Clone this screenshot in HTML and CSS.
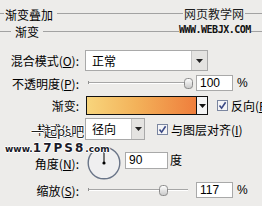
FILE: index.html
```html
<!DOCTYPE html>
<html>
<head>
<meta charset="utf-8">
<link rel="stylesheet" href="styles.css">
</head>
<body>
<div class="panel">
  <div class="legend l1"><span class="lead"></span><span class="lt">渐变叠加</span><span class="rule"></span></div>
  <div class="legend l2"><span class="lead"></span><span class="lt">渐变</span><span class="rule"></span></div>

  <div class="row r-blend">
    <span class="lab">混合模式(<u>O</u>):</span>
    <div class="select s-blend"><span class="val">正常</span><span class="btn"><svg width="7" height="4" viewBox="0 0 7 4"><polygon points="0,0 7,0 3.5,4" fill="#222"/></svg></span></div>
  </div>

  <div class="row r-opac">
    <span class="lab">不透明度(<u>P</u>):</span>
    <div class="slider"><span class="tick"></span><span class="thumb" style="left:96px"><svg width="9" height="11" viewBox="0 0 9 11"><defs><linearGradient id="tg1" x1="0" y1="0" x2="0" y2="1"><stop offset="0" stop-color="#ffffff"/><stop offset="1" stop-color="#c8c8c8"/></linearGradient></defs><rect x="0.5" y="0.5" width="8" height="10" rx="3" fill="url(#tg1)" stroke="#8a8a8a"/></svg></span></div>
    <div class="num n-opac">100</div><span class="unit">%</span>
  </div>

  <div class="row r-grad">
    <span class="lab">渐变:</span>
    <div class="grad"></div>
    <span class="gbtn"><svg width="7" height="4" viewBox="0 0 7 4"><polygon points="0,0 7,0 3.5,4" fill="#111"/></svg></span>
    <span class="cb cb-rev"><svg width="11" height="11" viewBox="0 0 11 11"><rect x="0.5" y="0.5" width="10" height="10" fill="#f4f4f6" stroke="#7b86a0"/><path d="M2.5 5.5 L4.6 8.2 L8.6 2.2" fill="none" stroke="#3c4a86" stroke-width="1.6"/></svg></span>
    <span class="cbl">反向(<u>R</u>)</span>
  </div>

  <div class="row r-style">
    <span class="lab">样式(<u>L</u>):</span>
    <div class="select s-style"><span class="val">径向</span><span class="btn"><svg width="7" height="4" viewBox="0 0 7 4"><polygon points="0,0 7,0 3.5,4" fill="#222"/></svg></span></div>
    <span class="cb cb-align"><svg width="11" height="11" viewBox="0 0 11 11"><rect x="0.5" y="0.5" width="10" height="10" fill="#f4f4f6" stroke="#7b86a0"/><path d="M2.5 5.5 L4.6 8.2 L8.6 2.2" fill="none" stroke="#3c4a86" stroke-width="1.6"/></svg></span>
    <span class="cbl">与图层对齐(<u>I</u>)</span>
  </div>

  <div class="row r-angle">
    <span class="lab">角度(<u>N</u>):</span>
    <span class="dial"><svg width="34" height="34" viewBox="0 0 34 34"><circle cx="17" cy="17" r="15.8" fill="#efeff0" stroke="#6a7588" stroke-width="1.4"/><line x1="17" y1="17" x2="17" y2="1.5" stroke="#000" stroke-width="1"/><circle cx="17" cy="17" r="1.6" fill="#000"/></svg></span>
    <div class="num n-angle">90</div><span class="unit">度</span>
  </div>

  <div class="row r-scale">
    <span class="lab">缩放(<u>S</u>):</span>
    <div class="slider"><span class="tick"></span><span class="thumb" style="left:71px"><svg width="9" height="11" viewBox="0 0 9 11"><defs><linearGradient id="tg2" x1="0" y1="0" x2="0" y2="1"><stop offset="0" stop-color="#ffffff"/><stop offset="1" stop-color="#c8c8c8"/></linearGradient></defs><rect x="0.5" y="0.5" width="8" height="10" rx="3" fill="url(#tg2)" stroke="#8a8a8a"/></svg></span></div>
    <div class="num n-scale">117</div><span class="unit">%</span>
  </div>

  <div class="wm wm-cn">网页教学网</div>
  <div class="wm wm-url">WWW.WEBJX.COM</div>
  <div class="wm wm-ps">一起ps吧</div>
  <div class="wm wm-17"><span class="sm">www.</span><span class="big">17PS8</span><span class="sm">.com</span></div>
</div>
</body>
</html>
```

FILE: styles.css
```css
html, body {
  margin: 0;
  padding: 0;
  background: #edecea;
}

.panel {
  position: relative;
  width: 262px;
  height: 206px;
  overflow: hidden;
  background: #edecea;
  font-family: "Noto Sans CJK SC", "Noto Sans", sans-serif;
  font-size: 12px;
  color: #000;
}

u {
  text-decoration: underline;
  text-underline-offset: 1px;
}

/* group legends */
.legend {
  display: flex;
  height: 18px;
  line-height: 18px;
  white-space: nowrap;
}
.legend .lead,
.legend .rule {
  height: 1px;
  background: #a2a2a2;
  flex: none;
}
.legend .rule {
  flex: 1;
}
.l1 {
  margin-top: 6px;
}
.l1 .lead {
  width: 4px;
  margin-top: 7px;
}
.l1 .rule {
  margin-top: 7px;
}
.l1 .lt {
  padding: 0 4px 0 1px;
}
.l2 {
  margin-top: -1px;
}
.l2 .lead {
  width: 11px;
  margin-top: 8px;
}
.l2 .rule {
  margin-top: 8px;
}
.l2 .lt {
  padding: 0 4px;
}

/* form rows */
.row {
  display: flex;
  align-items: center;
  white-space: nowrap;
}
.lab {
  width: 79px;
  flex: none;
  text-align: right;
}
.r-blend { height: 21px; margin-top: 9px; }
.r-opac  { height: 16px; margin-top: 4px; }
.r-grad  { height: 19px; margin-top: 5px; }
.r-style { height: 22px; margin-top: 3px; }
.r-angle { height: 34px; margin-top: 6px; }
.r-scale { height: 16px; margin-top: 2px; }

/* dropdowns */
.select {
  display: flex;
  height: 100%;
  box-sizing: border-box;
  border: 1px solid #a9a9a9;
  background: #fff;
  margin-left: 6px;
  flex: none;
}
.select .val {
  flex: 1;
  padding-left: 6px;
  line-height: 19px;
}
.select .btn {
  width: 15px;
  flex: none;
  display: flex;
  align-items: center;
  justify-content: center;
  background: #e4e3e1;
  border-left: 1px solid #c4c4c4;
}
.s-blend { width: 123px; }
.s-style { width: 60px; }
.s-style .btn { width: 12px; }

/* sliders */
.slider {
  position: relative;
  width: 100px;
  height: 16px;
  margin-left: 9px;
  flex: none;
}
.slider::before {
  content: "";
  position: absolute;
  left: 0;
  right: 0;
  top: 7px;
  height: 1px;
  background: #a6a6a6;
  box-shadow: 0 1px 0 #ffffff;
}
.slider .tick {
  position: absolute;
  left: 0;
  top: 6px;
  width: 1px;
  height: 3px;
  background: #909090;
}
.slider .thumb {
  position: absolute;
  top: 3px;
  width: 9px;
  height: 11px;
  display: block;
}
.slider .thumb svg { display: block; }

/* numeric inputs */
.num {
  box-sizing: border-box;
  background: #fff;
  border: 1px solid #a9a9a9;
  font-family: "Liberation Sans", Arial, sans-serif;
  font-size: 12px;
  padding-left: 3px;
  flex: none;
}
.n-opac, .n-scale {
  width: 37px;
  height: 16px;
  line-height: 14px;
  margin-left: 8px;
}
.n-angle {
  width: 43px;
  height: 17px;
  line-height: 15px;
  margin-left: 4px;
  align-self: flex-start;
  margin-top: 6px;
}
.unit {
  margin-left: 4px;
  font-family: "Liberation Sans", Arial, sans-serif;
}
.r-angle .unit {
  font-family: "Noto Sans CJK SC", sans-serif;
  margin-left: 2px;
  align-self: flex-start;
  margin-top: 5px;
}

/* gradient swatch */
.grad {
  width: 111px;
  height: 100%;
  box-sizing: border-box;
  margin-left: 7px;
  border: 1px solid #111;
  background: linear-gradient(to right, #f8d57c, #f3b25a 45%, #ef7e3c);
  flex: none;
}
.gbtn {
  width: 11px;
  height: 100%;
  box-sizing: border-box;
  border: 1px solid #111;
  border-left: none;
  background: #f4f4f4;
  display: flex;
  align-items: center;
  justify-content: center;
  flex: none;
}

/* checkboxes */
.cb {
  width: 11px;
  height: 11px;
  flex: none;
}
.cb svg { display: block; }
.cb-rev { margin-left: 9px; }
.cb-align { margin-left: 12px; }
.cbl { margin-left: 3px; }

/* angle dial */
.dial {
  width: 34px;
  height: 34px;
  margin-left: 8px;
  flex: none;
}
.dial svg { display: block; }

/* watermarks (overlays) */
.wm {
  position: absolute;
  white-space: nowrap;
}
.wm-cn {
  left: 183px;
  top: 6px;
  font-size: 12px;
  line-height: 16px;
  color: #1c1c1c;
  background: #edecea;
  padding: 0 1px;
}
.wm-url {
  left: 179px;
  top: 24px;
  font-family: "DejaVu Sans Mono", monospace;
  font-weight: bold;
  font-size: 10px;
  line-height: 11px;
  letter-spacing: -0.5px;
  color: #111;
  background: #edecea;
}
.wm-ps {
  left: 31px;
  top: 122px;
  font-size: 13px;
  line-height: 17px;
  color: #222;
  text-shadow: 1px 0 0 #fff, -1px 0 0 #fff, 0 1px 0 #fff, 0 -1px 0 #fff;
}
.wm-17 {
  left: 5px;
  top: 141px;
  font-family: "DejaVu Sans", sans-serif;
  font-weight: bold;
  color: #1a1a28;
  line-height: 14px;
  text-shadow: 1px 0 0 #fff, -1px 0 0 #fff, 0 1px 0 #fff, 0 -1px 0 #fff;
}
.wm-17 .sm {
  font-size: 9px;
}
.wm-17 .big {
  font-size: 12px;
  letter-spacing: 2px;
}
```
